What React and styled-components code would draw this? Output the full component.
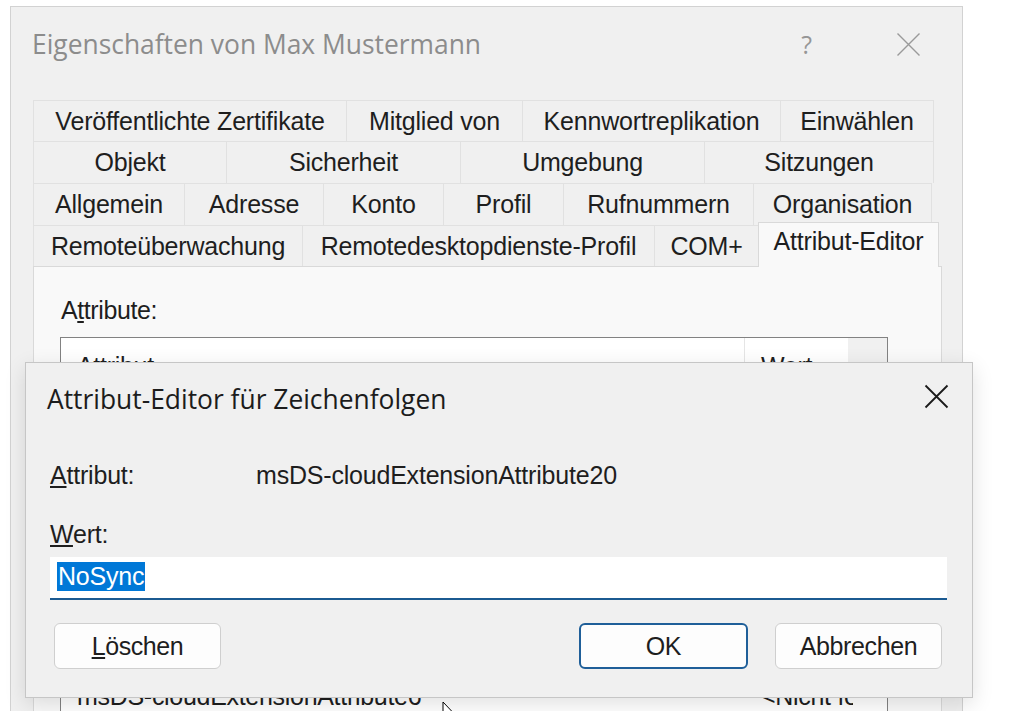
import React from "react";
import styled, { createGlobalStyle } from "styled-components";

const tabRows = [
  [
    ["Veröffentlichte Zertifikate", 314],
    ["Mitglied von", 177],
    ["Kennwortreplikation", 259],
    ["Einwählen", 154],
  ],
  [
    ["Objekt", 194],
    ["Sicherheit", 235],
    ["Umgebung", 245],
    ["Sitzungen", 230],
  ],
  [
    ["Allgemein", 152],
    ["Adresse", 140],
    ["Konto", 121],
    ["Profil", 121],
    ["Rufnummern", 191],
    ["Organisation", 179],
  ],
  [
    ["Remoteüberwachung", 270],
    ["Remotedesktopdienste-Profil", 353],
    ["COM+", 105],
    ["Attribut-Editor", 176, true],
  ],
];

const rowHeights = [41, 42, 42, 41];

const attributes = [
  ["msDS-cloudExtensionAttribute1", "<Nicht festgelegt>"],
  ["msDS-cloudExtensionAttribute10", "<Nicht festgelegt>"],
  ["msDS-cloudExtensionAttribute11", "<Nicht festgelegt>"],
  ["msDS-cloudExtensionAttribute12", "<Nicht festgelegt>"],
  ["msDS-cloudExtensionAttribute13", "<Nicht festgelegt>"],
  ["msDS-cloudExtensionAttribute14", "<Nicht festgelegt>"],
  ["msDS-cloudExtensionAttribute2", "<Nicht festgelegt>"],
  ["msDS-cloudExtensionAttribute20", "NoSync"],
  ["msDS-cloudExtensionAttribute3", "<Nicht festgelegt>"],
  ["msDS-cloudExtensionAttribute4", "<Nicht festgelegt>"],
  ["msDS-cloudExtensionAttribute5", "<Nicht festgelegt>"],
  ["msDS-cloudExtensionAttribute6", "<Nicht festgelegt>"],
  ["msDS-cloudExtensionAttribute7", "<Nicht festgelegt>"],
];

const GlobalStyle = createGlobalStyle`
  html, body {
    margin: 0;
    padding: 0;
    background: #fff;
    overflow: hidden;
  }
`;

const Desktop = styled.div`
  position: relative;
  width: 1024px;
  height: 711px;
  overflow: hidden;
  background: #fff;
`;

const Window = styled.div`
  position: absolute;
  left: 10px;
  top: 6px;
  width: 953px;
  height: 780px;
  box-sizing: border-box;
  background: #f0f0f0;
  border: 1px solid #d2d2d2;
  display: flex;
  flex-direction: column;
`;

const TitleBar = styled.div`
  height: 74px;
  flex: 0 0 auto;
  display: flex;
  align-items: center;
  padding: 0 41px 0 21px;
  font-family: "Open Sans", "Noto Sans", sans-serif;
  font-size: 26.4px;
  color: ${(p) => (p.$active ? "#1c1c1c" : "#8c8c8c")};
`;

const TitleText = styled.span`
  white-space: nowrap;
`;

const HelpMark = styled.span`
  margin-left: auto;
  margin-right: 84px;
  font-size: 25px;
  color: #969696;
`;

const CloseIcon = ({ color, width }) => (
  <svg width="25" height="25" viewBox="0 0 25 25">
    <path d="M1.5 1.5 L23.5 23.5 M23.5 1.5 L1.5 23.5" stroke={color} strokeWidth={width} fill="none" />
  </svg>
);

const WindowBody = styled.div`
  flex: 1;
  display: flex;
  flex-direction: column;
  padding: 19px 20px 0 22px;
  font-family: "Liberation Sans", Arial, sans-serif;
  font-size: 25px;
  color: #1e1e1e;
`;

const TabRow = styled.div`
  display: flex;
  width: 904px;
  height: ${(p) => p.$h}px;
`;

const Tab = styled.div`
  flex: 0 0 ${(p) => p.$w}px;
  box-sizing: border-box;
  display: flex;
  align-items: center;
  justify-content: center;
  border: 1px solid #e1e1e1;
  border-bottom: none;
  margin-left: -1px;
  background: ${(p) => (p.$selected ? "#f9f9f9" : "#f0f0f0")};
  letter-spacing: -0.2px;
  white-space: nowrap;
  ${(p) =>
    p.$selected &&
    `
    position: relative;
    z-index: 1;
    margin-top: -3px;
    margin-right: -5px;
    margin-bottom: -1px;
    flex-basis: ${p.$w + 5}px;
    padding-bottom: 8px;
    border-color: #d9d9d9;
  `}
  &:first-child {
    margin-left: 0;
  }
`;

const Panel = styled.div`
  flex: 1;
  background: #f9f9f9;
  border: 1px solid #d9d9d9;
  padding: 26px 52px 0 26px;
`;

const FieldLabel = styled.div`
  height: 34px;
  line-height: 34px;
  letter-spacing: -0.4px;
  padding-left: 1px;
`;

const ListBox = styled.div`
  margin-top: 10px;
  width: 828px;
  box-sizing: border-box;
  border: 1px solid #828282;
  background: #fff;
`;

const ListHeader = styled.div`
  display: flex;
  height: 48px;
`;

const HeaderCell = styled.div`
  flex: 0 0 ${(p) => p.$w}px;
  box-sizing: border-box;
  padding: 14px 0 0 16px;
  line-height: 28px;
  border-right: ${(p) => (p.$divider ? "1px solid #e5e5e5" : "none")};
  background: ${(p) => (p.$filler ? "#f0f0f0" : "#fff")};
  letter-spacing: -0.3px;
`;

const ListRow = styled.div`
  display: flex;
  height: 27px;
  line-height: 27px;
  letter-spacing: -0.3px;
  white-space: nowrap;
`;

const RowCell = styled.div`
  flex: 0 0 ${(p) => p.$w}px;
  padding-left: 16px;
  box-sizing: border-box;
  overflow: hidden;
`;

const Dialog = styled.div`
  position: absolute;
  left: 25px;
  top: 362px;
  width: 948px;
  height: 336px;
  box-sizing: border-box;
  background: #f0f0f0;
  border: 1px solid #c6c6c6;
  box-shadow: 0 6px 20px rgba(0, 0, 0, 0.12);
  display: flex;
  flex-direction: column;
  z-index: 2;
`;

const DialogTitleBar = styled(TitleBar)`
  height: 72px;
  padding: 0 23px 0 21px;
  justify-content: space-between;
  svg {
    margin-bottom: 6px;
  }
`;

const DialogBody = styled.div`
  display: flex;
  flex-direction: column;
  padding: 20px 25px 28px 24px;
  font-family: "Liberation Sans", Arial, sans-serif;
  font-size: 25px;
  color: #1e1e1e;
`;

const InfoRow = styled.div`
  display: grid;
  grid-template-columns: 206px 1fr;
  height: 40px;
  align-items: center;
  letter-spacing: -0.2px;
`;

const ValueLabel = styled.div`
  margin-top: 20px;
  height: 38px;
  display: flex;
  align-items: center;
  letter-spacing: -0.2px;
`;

const TextField = styled.div`
  margin-top: 4px;
  height: 43px;
  box-sizing: border-box;
  background: #fff;
  border-bottom: 2px solid #1b5a91;
  display: flex;
  align-items: center;
  padding: 0 0 2px 7px;
`;

const Selection = styled.span`
  background: #0078d7;
  color: #fff;
  line-height: 29px;
  padding: 0 1px;
  letter-spacing: -0.2px;
`;

const ButtonRow = styled.div`
  margin-top: 23px;
  display: flex;
  align-items: center;
  gap: 27px;
  padding: 0 5px 0 4px;
`;

const Button = styled.button`
  width: ${(p) => p.$w}px;
  height: 46px;
  box-sizing: border-box;
  border-radius: 6px;
  background: #fdfdfd;
  border: ${(p) => (p.$default ? "2px solid #1f5f99" : "1px solid #cfcfcf")};
  font-family: "Liberation Sans", Arial, sans-serif;
  font-size: 25px;
  color: #1e1e1e;
  letter-spacing: -0.4px;
  padding: 0;
  &:first-child {
    margin-right: auto;
  }
`;

const Pointer = styled.svg`
  position: absolute;
  left: 442px;
  top: 701px;
  z-index: 3;
`;

export default function App() {
  return (
    <Desktop>
      <GlobalStyle />
      <Window>
        <TitleBar>
          <TitleText>Eigenschaften von Max Mustermann</TitleText>
          <HelpMark>?</HelpMark>
          <CloseIcon color="#9a9a9a" width={1.4} />
        </TitleBar>
        <WindowBody>
          {tabRows.map((row, i) => (
            <TabRow key={i} $h={rowHeights[i]}>
              {row.map(([label, w, selected]) => (
                <Tab key={label} $w={w} $selected={selected}>
                  {label}
                </Tab>
              ))}
            </TabRow>
          ))}
          <Panel>
            <FieldLabel>
              A<u>t</u>tribute:
            </FieldLabel>
            <ListBox>
              <ListHeader>
                <HeaderCell $w={684} $divider>
                  Attribut
                </HeaderCell>
                <HeaderCell $w={103}>Wert</HeaderCell>
                <HeaderCell $w={39} $filler />
              </ListHeader>
              {attributes.map(([name, value]) => (
                <ListRow key={name}>
                  <RowCell $w={684}>{name}</RowCell>
                  <RowCell $w={108}>{value}</RowCell>
                </ListRow>
              ))}
            </ListBox>
          </Panel>
        </WindowBody>
      </Window>

      <Dialog>
        <DialogTitleBar $active>
          <TitleText>Attribut-Editor für Zeichenfolgen</TitleText>
          <CloseIcon color="#1a1a1a" width={1.8} />
        </DialogTitleBar>
        <DialogBody>
          <InfoRow>
            <span>
              <u>A</u>ttribut:
            </span>
            <span>msDS-cloudExtensionAttribute20</span>
          </InfoRow>
          <ValueLabel>
            <span>
              <u>W</u>ert:
            </span>
          </ValueLabel>
          <TextField>
            <Selection>NoSync</Selection>
          </TextField>
          <ButtonRow>
            <Button $w={167}>
              <u>L</u>öschen
            </Button>
            <Button $w={169} $default>
              OK
            </Button>
            <Button $w={167}>Abbrechen</Button>
          </ButtonRow>
        </DialogBody>
      </Dialog>

      <Pointer width="14" height="20" viewBox="0 0 14 20">
        <path d="M1 1 L1 16 L4.5 12.5 L7 18 L9 17 L6.5 11.5 L11 11.5 Z" fill="#fff" stroke="#000" strokeWidth="1" />
      </Pointer>
    </Desktop>
  );
}
